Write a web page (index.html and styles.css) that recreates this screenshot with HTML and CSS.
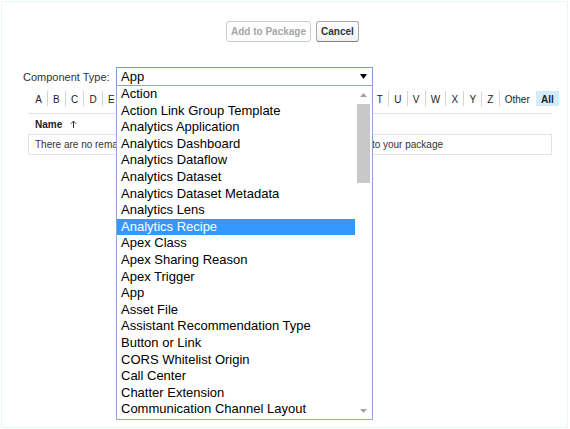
FILE: index.html
```html
<!DOCTYPE html>
<html>
<head>
<meta charset="utf-8">
<link rel="stylesheet" href="styles.css">
</head>
<body>
<div class="frame">
  <div class="buttons">
    <button class="btn btn-disabled">Add to Package</button>
    <button class="btn">Cancel</button>
  </div>
  <div class="type-row">
    <label class="type-label">Component Type:</label>
    <div class="select">
      <span class="select-value">App</span>
      <svg class="select-arrow" width="7" height="5" viewBox="0 0 7 5"><polygon points="0,0 7,0 3.5,5" fill="#000"/></svg>
      <div class="dropdown">
        <ul class="options">
          <li>Action</li>
          <li>Action Link Group Template</li>
          <li>Analytics Application</li>
          <li>Analytics Dashboard</li>
          <li>Analytics Dataflow</li>
          <li>Analytics Dataset</li>
          <li>Analytics Dataset Metadata</li>
          <li>Analytics Lens</li>
          <li class="selected">Analytics Recipe</li>
          <li>Apex Class</li>
          <li>Apex Sharing Reason</li>
          <li>Apex Trigger</li>
          <li>App</li>
          <li>Asset File</li>
          <li>Assistant Recommendation Type</li>
          <li>Button or Link</li>
          <li>CORS Whitelist Origin</li>
          <li>Call Center</li>
          <li>Chatter Extension</li>
          <li>Communication Channel Layout</li>
        </ul>
        <div class="scrollbar">
          <div class="sb-btn"><svg width="7" height="4" viewBox="0 0 7 4"><polygon points="0,4 7,4 3.5,0" fill="#a3a3a3"/></svg></div>
          <div class="sb-thumb"></div>
          <div class="sb-space"></div>
          <div class="sb-btn"><svg width="7" height="4" viewBox="0 0 7 4"><polygon points="0,0 7,0 3.5,4" fill="#a3a3a3"/></svg></div>
        </div>
      </div>
    </div>
  </div>
  <div class="rolodex">
    <a class="first">A</a><a>B</a><a>C</a><a>D</a><a>E</a><a>F</a><a>G</a><a>H</a><a>I</a><a>J</a><a>K</a><a>L</a><a>M</a><a>N</a><a>O</a><a>P</a><a>Q</a><a>R</a><a>S</a><a>T</a><a>U</a><a>V</a><a>W</a><a>X</a><a>Y</a><a>Z</a><a>Other</a><a class="all">All</a>
  </div>
  <div class="table">
    <div class="thead"><span>Name</span><svg width="7" height="8" viewBox="0 0 7 8"><path d="M3.5 8V1.2M1 3.7L3.5 1.2L6 3.7" fill="none" stroke="#333" stroke-width="1"/></svg></div>
    <div class="trow">There are no remaining unpackaged components of this type eligible to add to your package</div>
  </div>
</div>
</body>
</html>
```

FILE: styles.css
```css
body {
  margin: 0;
  font-family: "Liberation Sans", Arial, sans-serif;
  background: #fff;
  color: #222;
}

.frame {
  margin: 1px;
  width: 567px;
  height: 427px;
  box-sizing: border-box;
  border: 1px solid #e6f6fc;
  overflow: hidden;
}

.buttons {
  display: flex;
  gap: 5px;
  padding-left: 224px;
  margin-top: 19px;
}

.btn {
  font-family: "Liberation Sans", Arial, sans-serif;
  font-weight: bold;
  font-size: 10px;
  line-height: 13px;
  padding: 3px 4px;
  border: 1px solid #a9a9a9;
  border-bottom-color: #7f7f7f;
  border-radius: 3px;
  background: linear-gradient(#ffffff, #f1f1f1);
  color: #333;
  margin: 0;
}

.btn-disabled {
  color: #a8a8a8;
  border-color: #cccccc;
  background: #fdfdfd;
}

.type-row {
  display: flex;
  align-items: center;
  margin-top: 25px;
  padding-left: 21px;
}

.type-label {
  width: 93px;
  font-size: 11px;
  color: #333;
}

.select {
  position: relative;
  width: 257px;
  height: 19px;
  box-sizing: border-box;
  border: 1px solid #7e9fd6;
  display: flex;
  align-items: center;
  padding-left: 4px;
  font-size: 13px;
  color: #000;
}

.select-arrow {
  margin-left: auto;
  margin-right: 5px;
}

.dropdown {
  position: absolute;
  left: -1px;
  top: 17px;
  width: 257px;
  height: 335px;
  box-sizing: border-box;
  border: 1px solid #8ea8d6;
  background: #fff;
  display: flex;
  z-index: 2;
}

.options {
  list-style: none;
  margin: 0;
  padding: 0;
  width: 238px;
  font-size: 13px;
  color: #000;
}

.options li {
  height: 16.6px;
  line-height: 16.6px;
  padding-left: 4px;
  white-space: nowrap;
}

.options li.selected {
  background: #3399ff;
  color: #fff;
}

.scrollbar {
  width: 17px;
  display: flex;
  flex-direction: column;
  align-items: center;
  background: #fff;
}

.sb-btn {
  height: 17px;
  width: 17px;
  display: flex;
  align-items: center;
  justify-content: center;
}

.sb-thumb {
  width: 13px;
  height: 79px;
  margin-top: 1px;
  background: #c8c8c8;
}

.sb-space {
  flex: 1;
}

.rolodex {
  display: flex;
  margin: 5px 0 0 28px;
  font-size: 10px;
  line-height: 13px;
  white-space: nowrap;
}

.rolodex a {
  padding: 2px 5.15px 0;
  border-left: 1px solid #d4d4d4;
  color: #222;
  text-decoration: none;
}

.rolodex a.first {
  border-left: 0;
}

.rolodex a.all {
  background: #d3ebfa;
  font-weight: bold;
  border-left-color: #fff;
}

.table {
  margin: 7px 0 0 26px;
  width: 524px;
  font-size: 10px;
  color: #333;
}

.thead {
  height: 22px;
  box-sizing: border-box;
  border-top: 1px solid #e3e3e3;
  border-bottom: 1px solid #e3e3e3;
  display: flex;
  align-items: center;
  gap: 8px;
  padding-left: 7px;
  font-weight: bold;
  color: #222;
}

.trow {
  height: 20px;
  box-sizing: border-box;
  border: 1px solid #e3e3e3;
  border-top: 0;
  line-height: 19px;
  padding-left: 6px;
  white-space: nowrap;
  overflow: hidden;
}
```
